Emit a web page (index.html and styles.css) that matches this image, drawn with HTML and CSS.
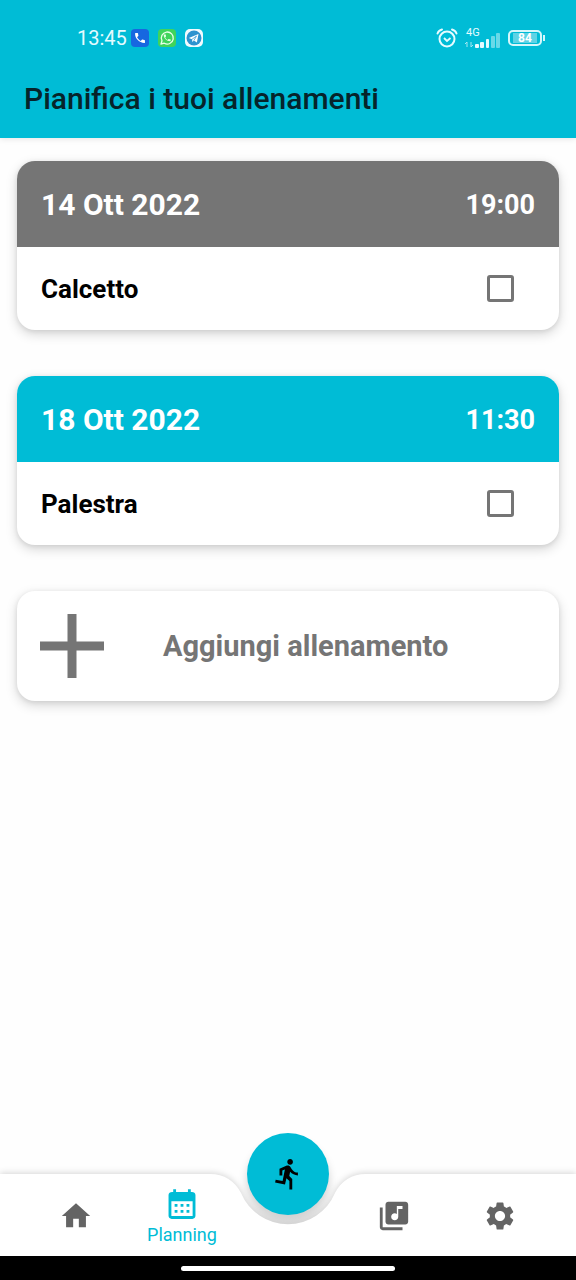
FILE: index.html
```html
<!DOCTYPE html>
<html lang="it">
<head>
<meta charset="utf-8">
<meta name="viewport" content="width=device-width, initial-scale=1">
<title>Pianifica i tuoi allenamenti</title>
<link rel="stylesheet" href="styles.css">
</head>
<body>
<div class="app">
  <header class="app-bar">
    <div class="status">
      <div class="status-left">
        <span class="clock">13:45</span>
        <svg class="status-app" viewBox="0 0 20 20" aria-hidden="true">
          <rect x="1" y="1" width="18" height="18" rx="4" fill="#1767e0"/>
          <path transform="translate(3.4 3.4) scale(.55)" fill="#fff" d="M6.62 10.79c1.44 2.83 3.76 5.14 6.59 6.59l2.2-2.2c.27-.27.67-.36 1.02-.24 1.12.37 2.33.57 3.57.57.55 0 1 .45 1 1V20c0 .55-.45 1-1 1C10.600 21 3 13.400 3 4c0-.55.45-1 1-1h3.500c.55 0 1 .45 1 1 0 1.250.2 2.450.57 3.570.11.35.03.74-.25 1.020l-2.200 2.200z"/>
        </svg>
        <svg class="status-app" viewBox="0 0 20 20" aria-hidden="true">
          <rect x="1" y="1" width="18" height="18" rx="4" fill="#3fd45b"/>
          <path d="M4 16l1-3.200A6 6 0 1 1 7.300 15.200z" fill="none" stroke="#e9ffe9" stroke-width="1.300" stroke-linejoin="round"/>
          <path transform="translate(5.600 5.300) scale(.38)" fill="#e9ffe9" d="M6.620 10.790c1.440 2.830 3.760 5.140 6.590 6.590l2.200-2.200c.27-.27.67-.36 1.020-.24 1.120.37 2.330.57 3.570.57.55 0 1 .45 1 1V20c0 .55-.45 1-1 1C10.600 21 3 13.400 3 4c0-.55.45-1 1-1h3.500c.55 0 1 .45 1 1 0 1.250.2 2.450.57 3.570.11.35.03.74-.25 1.020l-2.200 2.200z"/>
        </svg>
        <svg class="status-app" viewBox="0 0 20 20" aria-hidden="true">
          <rect x="1" y="1" width="18" height="18" rx="5" fill="#f2fbff"/>
          <circle cx="10" cy="10" r="7.500" fill="#2e93cf"/>
          <path d="M4.800 10l9.700-4-1.600 8.600-3-2.100-1.500 1.500-.4-2.700z" fill="#fff"/>
          <path d="M8 11.300l4.500-3.300-2.600 4.500" fill="none" stroke="#2e93cf" stroke-width=".7"/>
        </svg>
      </div>
      <div class="status-right">
        <svg class="alarm" viewBox="0 0 22 22" fill="none" stroke="#e6fbff" aria-hidden="true">
          <circle cx="11" cy="12" r="7.500" stroke-width="2"/>
          <path d="M8 11l3 3 3.500-3" stroke-width="1.800"/>
          <path d="M1.500 6.500Q2.500 3.500 6 2.500M20.500 6.500Q19.500 3.500 16 2.500" stroke-width="2" stroke-linecap="round"/>
        </svg>
        <div class="network">
          <span class="network-type">4G</span>
          <svg class="signal" viewBox="0 0 36 18" aria-hidden="true">
            <path d="M2 11v5M0 13l2-2M6 11v5M6 16l2-2" fill="none" stroke="#a5e8f2" stroke-width="1"/>
            <g fill="#e6fbff"><rect x="10" y="13" width="4" height="4" rx="1"/><rect x="15" y="11" width="4" height="6" rx="1"/><rect x="21" y="8" width="3" height="9" rx="1"/></g>
            <g fill="#68d9e8"><rect x="26" y="5" width="4" height="12" rx="1"/><rect x="31" y="2" width="4" height="15" rx="1"/></g>
          </svg>
        </div>
        <div class="battery"><span class="battery-level">84</span></div>
      </div>
    </div>
    <h1 class="title">Pianifica i tuoi allenamenti</h1>
  </header>

  <main class="content">
    <article class="card">
      <div class="card-head card-head-past">
        <h2 class="date">14 Ott 2022</h2>
        <time class="time">19:00</time>
      </div>
      <div class="card-body">
        <label class="activity" for="calcetto">Calcetto</label>
        <input class="check" type="checkbox" id="calcetto">
      </div>
    </article>
    <article class="card">
      <div class="card-head">
        <h2 class="date">18 Ott 2022</h2>
        <time class="time">11:30</time>
      </div>
      <div class="card-body">
        <label class="activity" for="palestra">Palestra</label>
        <input class="check" type="checkbox" id="palestra">
      </div>
    </article>
    <button class="card add" type="button">
      <svg class="plus" viewBox="0 0 64 64" aria-hidden="true"><path d="M27.500 0h9v27.500H64v9H36.500V64h-9V36.500H0v-9h27.500z" fill="#757575"/></svg>
      <span class="add-label">Aggiungi allenamento</span>
    </button>
  </main>

  <nav class="nav" aria-label="Principale">
    <button class="fab" type="button" aria-label="Avvia allenamento">
      <svg class="icon" viewBox="0 0 24 24" aria-hidden="true"><path d="M13.490 5.480c1.100 0 2-.9 2-2s-.9-2-2-2-2 .9-2 2 .9 2 2 2zm-3.600 13.900l1-4.400 2.100 2v6h2v-7.500l-2.100-2 .6-3c1.300 1.500 3.300 2.500 5.500 2.500v-2c-1.900 0-3.500-1-4.300-2.400l-1-1.600c-.4-.6-1-1-1.700-1-.3 0-.5.100-.8.100l-5.200 2.200v4.700h2v-3.400l1.800-.7-1.600 8.100-4.900-1-.4 2 7 1.400z"/></svg>
    </button>
    <div class="nav-back" aria-hidden="true">
      <div class="nav-side"></div>
      <svg class="notch" viewBox="0 0 168 82"><path d="M0 0H6C20 0 31 7 37 19A51 51 0 0 0 131 19C137 7 148 0 162 0H168V82H0z" fill="#fff"/></svg>
      <div class="nav-side"></div>
    </div>
    <div class="nav-items">
      <a class="nav-item" href="#" aria-label="Home">
        <svg class="icon" viewBox="0 0 24 24" aria-hidden="true"><path d="M10 20v-6h4v6h5v-8h3L12 3 2 12h3v8z"/></svg>
      </a>
      <a class="nav-item nav-item-active" href="#" aria-current="page">
        <svg class="icon" viewBox="0 0 24 24" aria-hidden="true"><path fill-rule="evenodd" d="M19 3.500h-.800V1.500h-2v2H7.800v-2h-2v2H5C3.600 3.500 2.500 4.400 2.500 5.600V20.300c0 1.200 1 2.200 2.200 2.200h14.600c1.200 0 2.200-1 2.200-2.200V5.600c0-1.200-1.100-2.100-2.500-2.100zM19.500 20.500h-15V10h15zM6.800 12h2v2h-2zM11 12h2v2h-2zM15.200 12h2v2h-2zM6.800 16.200h2v2h-2zM11 16.200h2v2h-2zM15.200 16.200h2v2h-2z"/></svg>
        <span class="nav-label">Planning</span>
      </a>
      <span></span>
      <a class="nav-item" href="#" aria-label="Musica">
        <svg class="icon" viewBox="0 0 24 24" aria-hidden="true"><path d="M20 2H8c-1.100 0-2 .9-2 2v12c0 1.100.9 2 2 2h12c1.100 0 2-.9 2-2V4c0-1.100-.9-2-2-2zm-2 5h-3v5.500c0 1.380-1.120 2.500-2.500 2.500S10 13.880 10 12.500s1.120-2.500 2.500-2.500c.57 0 1.080.190 1.500.510V5h4v2zM4 6H2v14c0 1.100.9 2 2 2h14v-2H4V6z"/></svg>
      </a>
      <a class="nav-item" href="#" aria-label="Impostazioni">
        <svg class="icon" viewBox="0 0 24 24" aria-hidden="true"><path d="M19.140 12.940c.04-.3.060-.610.060-.940s-.020-.640-.070-.940l2.030-1.580c.180-.140.230-.410.120-.610l-1.920-3.320c-.120-.220-.370-.290-.590-.220l-2.390.960c-.5-.380-1.030-.7-1.620-.940L14.400 2.810c-.040-.240-.240-.410-.480-.410h-3.840c-.240 0-.430.170-.470.410L9.250 5.350c-.590.240-1.130.570-1.620.940l-2.390-.960c-.220-.080-.470 0-.590.220L2.740 8.870c-.120.210-.080.470.120.610l2.030 1.580c-.050.300-.090.630-.090.940s.020.640.070.940l-2.030 1.580c-.180.140-.230.410-.120.610l1.920 3.320c.120.220.370.290.590.220l2.390-.960c.5.380 1.030.7 1.620.940l.360 2.540c.050.240.240.410.480.410h3.840c.240 0 .440-.170.470-.410l.360-2.540c.590-.240 1.130-.560 1.620-.940l2.390.960c.220.080.470 0 .590-.220l1.920-3.320c.120-.220.070-.470-.120-.610l-2.010-1.580zM12 15.600c-1.980 0-3.600-1.620-3.600-3.600s1.620-3.600 3.600-3.600 3.600 1.620 3.600 3.600-1.620 3.600-3.600 3.600z"/></svg>
      </a>
    </div>
  </nav>
  <div class="gesture-bar"><div class="gesture-pill"></div></div>
</div>
</body>
</html>
```

FILE: styles.css
```css
* {
  box-sizing: border-box;
}

body {
  margin: 0;
  background: #fefefe;
  font-family: Roboto, "Noto Sans", sans-serif;
}

.app {
  display: flex;
  flex-direction: column;
  min-height: 100vh;
}

/* Top bar */

.app-bar {
  padding: 24px 24px 20px;
  background: #00bcd6;
  box-shadow: 0 1px 6px rgba(0, 0, 0, 0.1);
}

.status {
  display: flex;
  justify-content: space-between;
  padding: 0 10px 0 53px;
  color: #e6fbff;
}

.status-left,
.status-right {
  display: flex;
  align-items: center;
  height: 28px;
}

.clock {
  margin-right: 3px;
  font-size: 20px;
  line-height: 28px;
}

.status-app {
  width: 20px;
  height: 20px;
  margin-right: 7px;
}

.status-right {
  gap: 7px;
}

.alarm {
  width: 22px;
  height: 22px;
}

.network {
  position: relative;
  display: flex;
  align-items: flex-end;
  height: 22px;
}

.network-type {
  position: absolute;
  top: 0;
  left: 1px;
  font-size: 11px;
  line-height: 12px;
}

.signal {
  width: 36px;
  height: 18px;
}

.battery {
  position: relative;
  display: flex;
  justify-content: center;
  align-items: center;
  width: 34px;
  height: 16px;
  border: 2px solid #d5f7fb;
  border-radius: 5px;
  background: linear-gradient(#5ed3e5, #5ed3e5) center / 24px 10px no-repeat;
}

.battery::after {
  content: "";
  position: absolute;
  top: 3px;
  right: -5px;
  width: 2px;
  height: 6px;
  background: #d5f7fb;
}

.battery-level {
  color: #fff;
  font-size: 12px;
  font-weight: 700;
  line-height: 12px;
}

.title {
  margin: 27px 0 0;
  color: #06242a;
  font-size: 30px;
  font-weight: 500;
  line-height: 39px;
}

/* Workout cards */

.content {
  display: flex;
  flex: 1;
  flex-direction: column;
  gap: 46px;
  padding: 23px 17px;
}

.card {
  overflow: hidden;
  border-radius: 18px;
  background: #fff;
  box-shadow: 0 4px 12px rgba(0, 0, 0, 0.17), 0 1px 5px rgba(0, 0, 0, 0.08);
}

.card-head,
.card-body {
  display: flex;
  justify-content: space-between;
  align-items: center;
  padding: 0 24px;
}

.card-head {
  height: 86px;
  padding-top: 2px;
  background: #00bcd6;
  color: #fff;
}

.card-head-past {
  background: #757575;
}

.date {
  margin: 0;
  font-size: 30px;
  font-weight: 700;
  line-height: 36px;
}

.time {
  font-size: 27px;
  font-weight: 700;
  line-height: 36px;
}

.card-body {
  height: 83px;
  padding-right: 45px;
}

.activity {
  color: #000;
  font-size: 26px;
  font-weight: 700;
  line-height: 32px;
}

.check {
  width: 27px;
  height: 27px;
  margin: 0;
  border: 3px solid #757575;
  border-radius: 3px;
  background: #fff;
  appearance: none;
}

.check:checked {
  background: #00bcd6;
}

.add {
  display: flex;
  align-items: center;
  width: 100%;
  height: 110px;
  padding: 0 23px;
  border: 0;
  color: #757575;
  font-family: inherit;
  text-align: left;
}

.plus {
  width: 64px;
  height: 64px;
}

.add-label {
  margin-left: 59px;
  font-size: 29px;
  font-weight: 700;
  line-height: 36px;
}

/* Bottom navigation */

.nav {
  position: relative;
  display: grid;
  height: 82px;
}

.nav-back,
.nav-items {
  grid-area: 1 / 1;
}

.nav-back {
  position: relative;
  display: flex;
  filter: drop-shadow(0 -1px 3px rgba(0, 0, 0, 0.16));
  pointer-events: none;
}

.nav-side {
  flex: 1;
  background: #fff;
}

.notch {
  width: 168px;
  height: 82px;
}

.nav-items {
  position: relative;
  display: grid;
  grid-template-columns: repeat(5, 1fr);
  padding: 2px 23px 0;
  pointer-events: none;
}

.nav-item {
  display: flex;
  flex-direction: column;
  justify-content: center;
  align-items: center;
  gap: 4px;
  color: #646464;
  text-decoration: none;
  pointer-events: auto;
}

.nav-item-active {
  color: #00bcd6;
}

.nav-label {
  font-size: 18px;
  line-height: 20px;
}

.icon {
  width: 34px;
  height: 34px;
  fill: currentColor;
}

.fab {
  position: absolute;
  top: -41px;
  left: calc(50% - 41px);
  display: flex;
  justify-content: center;
  align-items: center;
  width: 82px;
  height: 82px;
  padding: 0;
  border: 0;
  border-radius: 50%;
  background: #00bcd6;
  box-shadow: 0 8px 10px rgba(0, 0, 0, 0.18);
  color: #000;
}

/* System gesture area */

.gesture-bar {
  position: relative;
  display: flex;
  justify-content: center;
  align-items: center;
  height: 24px;
  background: #000;
}

.gesture-pill {
  width: 37%;
  height: 5px;
  border-radius: 3px;
  background: #fff;
}
```
